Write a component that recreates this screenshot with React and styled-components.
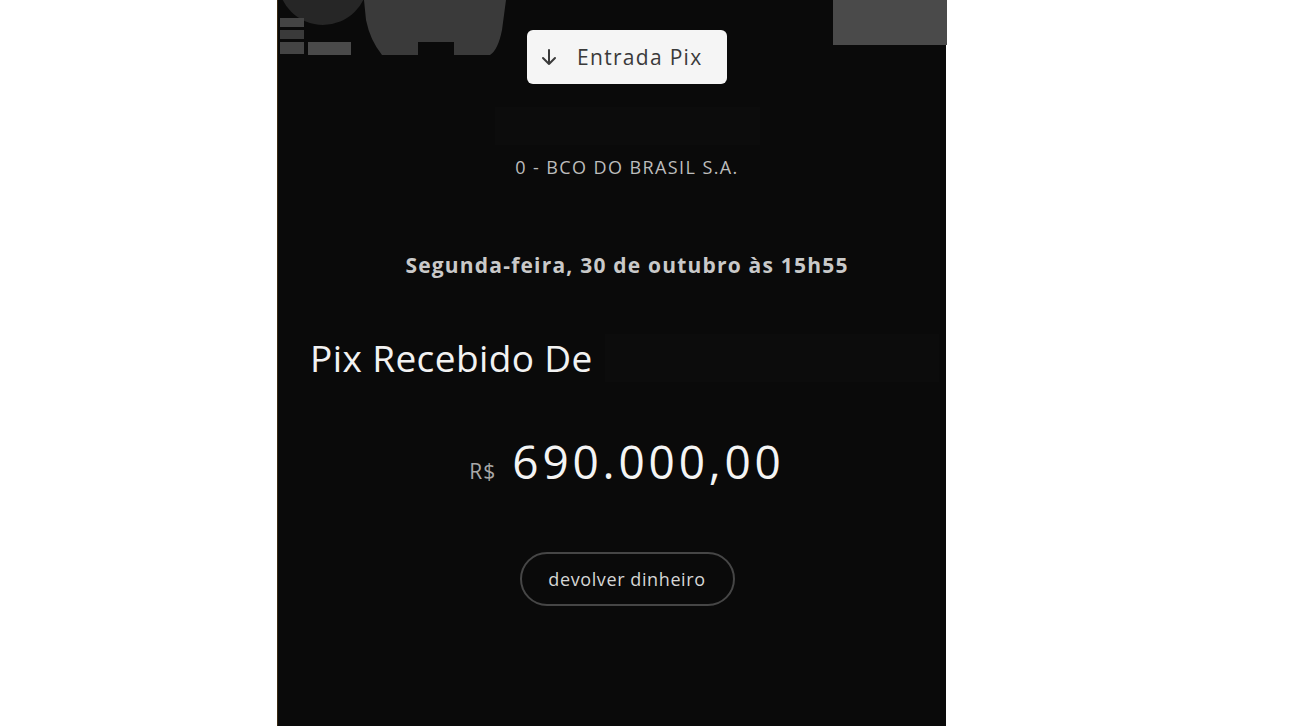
import React from 'react'
import styled, { createGlobalStyle } from 'styled-components'

const GlobalStyle = createGlobalStyle`
  html, body {
    margin: 0;
    padding: 0;
    background: #fff;
  }
  body {
    font-family: "Open Sans", "Noto Sans", sans-serif;
  }
`

const Page = styled.div`
  display: flex;
  width: 1290px;
  height: 726px;
  overflow: hidden;
`

const Panel = styled.div`
  margin-left: 277px;
  width: 669px;
  height: 726px;
  background: #0a0a0a;
  border-left: 1px solid #3a2a12;
  box-sizing: border-box;
  position: relative;
`

const Backdrop = styled.svg`
  position: absolute;
  left: 0;
  top: 0;
`

const Content = styled.div`
  position: relative;
  display: flex;
  flex-direction: column;
  align-items: center;
  padding: 30px 0 0 30px;
`

const EntryBadge = styled.div`
  display: flex;
  align-items: center;
  gap: 18px;
  height: 54px;
  width: 200px;
  box-sizing: border-box;
  padding: 0 0 0 12px;
  background: #f5f5f5;
  border-radius: 6px;
  color: #3a3a3a;
  font-size: 21px;
  font-weight: 500;
  letter-spacing: 1.3px;
`

const Redacted = styled.div`
  width: ${({ w }) => w}px;
  height: ${({ h }) => h}px;
  background: #0c0c0c;
`

const NameRow = styled.div`
  margin-top: 23px;
`

const Bank = styled.div`
  margin-top: 10px;
  color: #bdbdbd;
  font-size: 18px;
  letter-spacing: 1.4px;
`

const DateLine = styled.div`
  margin-top: 72px;
  color: #c9c9c9;
  font-size: 21px;
  font-weight: 700;
  letter-spacing: 1.2px;
`

const TitleRow = styled.div`
  align-self: stretch;
  display: flex;
  align-items: center;
  margin-top: 53px;
  gap: 12px;
`

const Title = styled.div`
  color: #f2f2f2;
  font-size: 37px;
  font-weight: 500;
  letter-spacing: 0.4px;
  padding-left: 2px;
`

const Amount = styled.div`
  display: flex;
  align-items: baseline;
  gap: 16px;
  margin-top: 47px;
  color: #f4f4f4;
`

const Currency = styled.span`
  font-size: 21px;
  color: #a8a8a8;
  letter-spacing: 1px;
`

const Value = styled.span`
  font-size: 46px;
  font-weight: 400;
  letter-spacing: 3.8px;
`

const ReturnButton = styled.div`
  margin-top: 60px;
  height: 54px;
  width: 215px;
  box-sizing: border-box;
  display: flex;
  align-items: center;
  justify-content: center;
  border: 2px solid #464646;
  border-radius: 27px;
  color: #d6d6d6;
  font-size: 18px;
  letter-spacing: 0.6px;
`

const ArrowDown = () => (
  <svg width="20" height="20" viewBox="0 0 20 20" fill="none" stroke="#3a3a3a" strokeWidth="2" strokeLinecap="round" strokeLinejoin="round">
    <path d="M10 3v14M4 11l6 6 6-6" />
  </svg>
)

const App = () => (
  <Page>
    <GlobalStyle />
    <Panel>
      <Backdrop width="669" height="60" viewBox="0 0 669 60">
        <circle cx="45" cy="-20" r="45" fill="#262626" />
        <path d="M86 0 H228 L224 30 Q220 50 212 55 H176 V42 H140 V55 H104 Q92 40 88 20 Z" fill="#3a3a3a" />
        <rect x="2" y="18" width="24" height="9" fill="#444" />
        <rect x="2" y="30" width="24" height="9" fill="#3a3a3a" />
        <rect x="2" y="42" width="24" height="12" fill="#444" />
        <rect x="30" y="42" width="43" height="13" fill="#4a4a4a" />
        <rect x="555" y="0" width="114" height="45" fill="#4a4a4a" />
      </Backdrop>
      <Content>
        <EntryBadge>
          <ArrowDown />
          <span>Entrada Pix</span>
        </EntryBadge>
        <NameRow>
          <Redacted w={265} h={38} />
        </NameRow>
        <Bank>0 - BCO DO BRASIL S.A.</Bank>
        <DateLine>Segunda-feira, 30 de outubro às 15h55</DateLine>
        <TitleRow>
          <Title>Pix Recebido De</Title>
          <Redacted w={334} h={48} />
        </TitleRow>
        <Amount>
          <Currency>R$</Currency>
          <Value>690.000,00</Value>
        </Amount>
        <ReturnButton>devolver dinheiro</ReturnButton>
      </Content>
    </Panel>
  </Page>
)

export default App
